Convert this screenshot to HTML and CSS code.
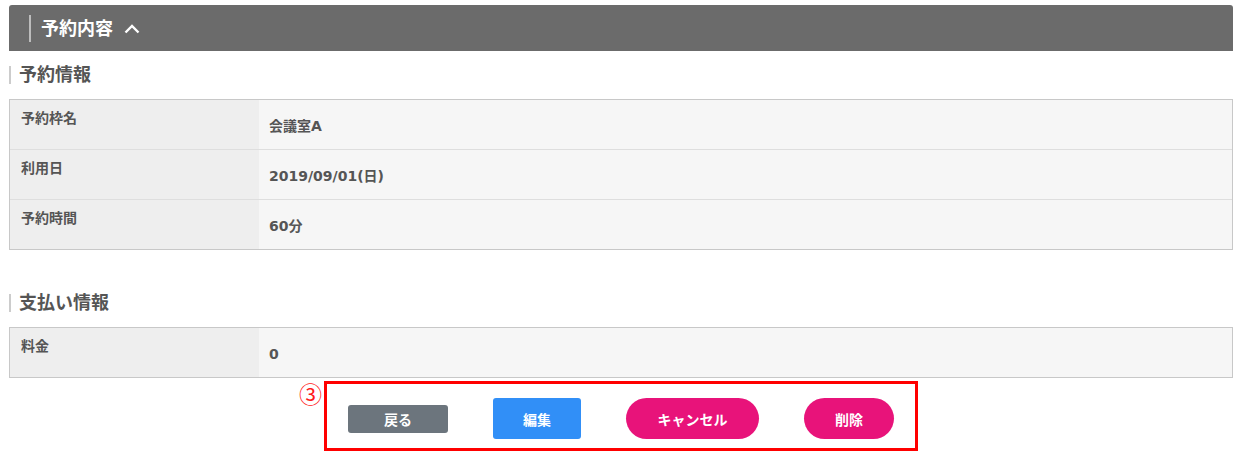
FILE: index.html
```html
<!DOCTYPE html>
<html lang="ja">
<head>
    <meta charset="UTF-8">
    <title>予約内容</title>
    <link rel="stylesheet" href="styles.css">
</head>
<body>

    <div class="panel-head">
        <span class="panel-title">予約内容</span>
        <svg class="chevron" width="16" height="10" viewBox="0 0 16 10">
            <polyline points="1.5,8.5 8,2 14.5,8.5" fill="none" stroke="#fff" stroke-width="2.4"/>
        </svg>
    </div>

    <!-- 予約情報 -->
    <h2 class="sub-title">予約情報</h2>
    <div class="info-table">
        <div class="info-row">
            <div class="info-label">予約枠名</div>
            <div class="info-value">会議室A</div>
        </div>
        <div class="info-row">
            <div class="info-label">利用日</div>
            <div class="info-value">2019/09/01(日)</div>
        </div>
        <div class="info-row">
            <div class="info-label">予約時間</div>
            <div class="info-value">60分</div>
        </div>
    </div>

    <!-- 支払い情報 -->
    <h2 class="sub-title pay">支払い情報</h2>
    <div class="info-table">
        <div class="info-row">
            <div class="info-label">料金</div>
            <div class="info-value">0</div>
        </div>
    </div>

    <div class="actions">
        <div class="action-box">
            <span class="mark">③</span>
            <button class="btn btn-back">戻る</button>
            <button class="btn btn-edit">編集</button>
            <button class="btn btn-pink btn-cancel">キャンセル</button>
            <button class="btn btn-pink btn-delete">削除</button>
        </div>
    </div>

</body>
</html>
```

FILE: styles.css
```css
body {
    margin: 0;
    padding: 5px 9px 0;
    background-color: #fff;
    font-family: "DejaVu Sans", "Noto Sans CJK JP", sans-serif;
    color: #555;
}

.panel-head {
    display: flex;
    align-items: center;
    height: 46px;
    padding-left: 20px;
    background-color: #6b6b6b;
    border-radius: 3px 3px 0 0;
}

.panel-title {
    border-left: 2px solid #bdbdbd;
    padding-left: 10px;
    line-height: 27px;
    color: #fff;
    font-size: 18px;
    font-weight: bold;
}

.chevron {
    margin-left: 11px;
    margin-top: 2px;
}

.sub-title {
    margin: 15px 0 15px;
    padding-left: 8px;
    border-left: 2px solid #ccc;
    font-size: 18px;
    line-height: 18px;
    height: 18px;
    color: #555;
}

.sub-title.pay {
    margin-top: 44px;
}

.info-table {
    border: 1px solid #c8c8c8;
    font-size: 14px;
    font-weight: bold;
    line-height: 16px;
    color: #555;
}

.info-row {
    display: grid;
    grid-template-columns: 249px 1fr;
    height: 49px;
}

.info-row + .info-row {
    border-top: 1px solid #dedede;
}

.info-label {
    padding: 10px 0 0 11px;
    background-color: #eeeeee;
}

.info-value {
    display: flex;
    align-items: center;
    padding: 2px 10px 0;
    background-color: #f6f6f6;
}

.actions {
    display: flex;
    justify-content: center;
    margin-top: 3px;
}

.action-box {
    position: relative;
    display: flex;
    align-items: center;
    gap: 45px;
    width: 547px;
    height: 64px;
    padding: 0 20px 0 21px;
    border: 3px solid #ff0000;
}

/* 注釈の番号 */
.mark {
    position: absolute;
    left: -28px;
    top: -3px;
    color: #ff1a1a;
    font-family: "Noto Sans CJK JP", sans-serif;
    font-size: 23px;
    line-height: 24px;
}

.btn {
    border: none;
    color: #fff;
    font-family: "Noto Sans CJK JP", sans-serif;
    font-size: 14px;
    font-weight: bold;
    cursor: pointer;
    margin-top: 5px;
}

.btn-back {
    width: 100px;
    height: 28px;
    border-radius: 3px;
    background-color: #6c757d;
}

.btn-edit {
    width: 88px;
    height: 41px;
    border-radius: 3px;
    background-color: #318ff7;
}

.btn-pink {
    height: 41px;
    border-radius: 21px;
    background-color: #e8137a;
}

.btn-cancel {
    width: 133px;
}

.btn-delete {
    width: 90px;
}
```
